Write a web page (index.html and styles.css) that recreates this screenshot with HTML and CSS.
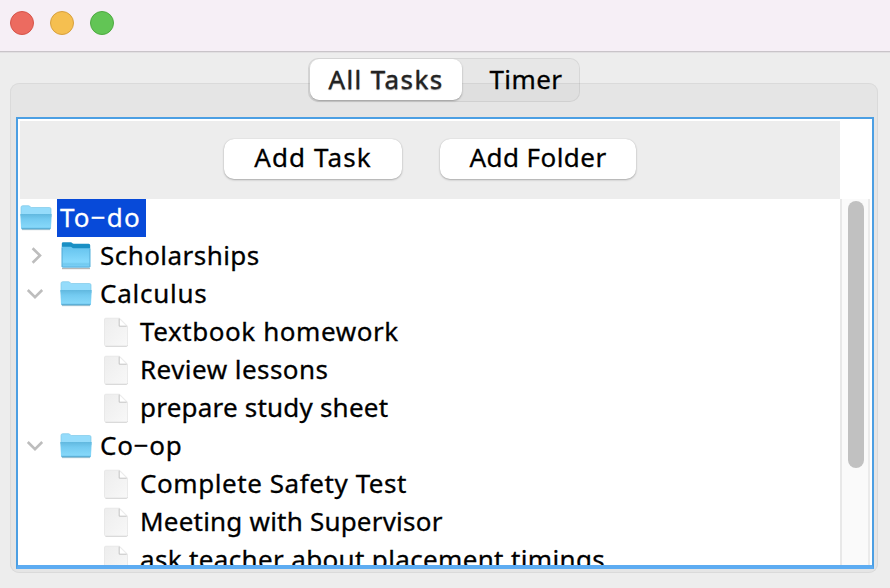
FILE: index.html
```html
<!DOCTYPE html>
<html lang="en">
<head>
<meta charset="utf-8">
<title>Tasks</title>
<link rel="stylesheet" href="styles.css">
</head>
<body>
<svg class="defs" aria-hidden="true">
  <defs>
    <linearGradient id="front" x1="0" y1="0" x2="0" y2="1"><stop offset="0" stop-color="#61b8df"/><stop offset=".35" stop-color="#74cbf1"/><stop offset=".85" stop-color="#85d7f9"/><stop offset="1" stop-color="#62bce8"/></linearGradient>
    <linearGradient id="closed" x1="0" y1="0" x2="0" y2="1"><stop offset="0" stop-color="#65c3ee"/><stop offset=".7" stop-color="#85d9fc"/><stop offset="1" stop-color="#70c8f2"/></linearGradient>
    <linearGradient id="paper" x1="0" y1="0" x2="1" y2="1"><stop offset="0" stop-color="#ededed"/><stop offset="1" stop-color="#f8f8f8"/></linearGradient>
    <symbol id="open-folder" viewBox="0 0 32 38">
      <path d="M2 30h28v1.2H2z" fill="#c6d0d4"/>
      <path d="M1 17V8.4Q1 6.7 2.7 6.7H8.6q1 0 1.5.9t1.5.9H29.5q1.5 0 1.5 1.5v8z" fill="#95dcfb" stroke="#7cc8e8" stroke-width=".7"/>
      <path d="M.3 15h31.4L31 29q-.1 1.2-1.2 1.2H2.2Q1.1 30.2 1 29z" fill="url(#front)"/>
      <path d="M1.8 29.8h28.4" stroke="#529fc4" stroke-width=".8"/>
    </symbol>
    <symbol id="closed-folder" viewBox="0 0 32 38">
      <path d="M2 31.5h28" stroke="#b7b7b7" stroke-width="1.4"/>
      <path d="M1.8 30V6.6Q1.8 5.2 3.3 5.2h7.4q1 0 1.5.8t1.5.8h15q1.5 0 1.5 1.5V30z" fill="#198fc4"/>
      <path d="M1.8 9.8h8.7q1 0 1.5.7t1.5.7h16.7v18.3q0 1-1 1H2.8q-1 0-1-1z" fill="url(#closed)"/>
      <path d="M2.2 11v18.6q0 .5.6.5h26.4q.6 0 .6-.5V12" fill="none" stroke="#51a9d4" stroke-width=".7"/>
      <path d="M3 27h26" stroke="#63b9df" stroke-width=".5"/>
    </symbol>
    <symbol id="file" viewBox="0 0 24 38">
      <path d="M1.5 33.3h21q1 0 1-1" fill="none" stroke="#cecece" stroke-width="1"/>
      <path d="M1.8 5.2h13.7l8 8v18.4q0 1.3-1.3 1.3H1.8q-1.3 0-1.3-1.3V6.5q0-1.3 1.3-1.3z" fill="url(#paper)" stroke="#e2e2e2" stroke-width=".7"/>
      <path d="M15.3 6.2v7h7z" fill="#fff"/>
      <path d="M15.2 5.7v7.5h7.5" fill="none" stroke="#b8b8b8" stroke-width=".8"/>
    </symbol>
    <symbol id="right" viewBox="0 0 18 38"><path d="m6.6 11.2 7.4 7.3-7.4 7.3" fill="none" stroke="#bdbdbd" stroke-width="2.6"/></symbol>
    <symbol id="down" viewBox="0 0 18 38"><path d="m1.8 15 7.2 7.2 7.2-7.2" fill="none" stroke="#bdbdbd" stroke-width="2.6"/></symbol>
  </defs>
</svg>
<header class="titlebar"><i class="light red"></i><i class="light yellow"></i><i class="light green"></i></header>
<main class="window">
  <section class="panel">
    <nav class="tabs"><span class="tab active">All Tasks</span><span class="tab timer">Timer</span></nav>
    <div class="pane">
      <div class="toolbar"><button class="add-task">Add Task</button><button class="add-folder">Add Folder</button></div>
      <div class="scroller">
        <div class="tree">
          <div class="row root"><svg class="folder"><use href="#open-folder"/></svg><span class="label selected">To−do</span></div>
          <div class="row"><svg class="arrow"><use href="#right"/></svg><svg class="folder"><use href="#closed-folder"/></svg><span class="label">Scholarships</span></div>
          <div class="row"><svg class="arrow"><use href="#down"/></svg><svg class="folder"><use href="#open-folder"/></svg><span class="label loose">Calculus</span></div>
          <div class="row leaf"><svg class="file"><use href="#file"/></svg><span class="label roomy">Textbook homework</span></div>
          <div class="row leaf"><svg class="file"><use href="#file"/></svg><span class="label">Review lessons</span></div>
          <div class="row leaf"><svg class="file"><use href="#file"/></svg><span class="label tight">prepare study sheet</span></div>
          <div class="row"><svg class="arrow"><use href="#down"/></svg><svg class="folder"><use href="#open-folder"/></svg><span class="label loose">Co−op</span></div>
          <div class="row leaf"><svg class="file"><use href="#file"/></svg><span class="label roomy">Complete Safety Test</span></div>
          <div class="row leaf"><svg class="file"><use href="#file"/></svg><span class="label tight">Meeting with Supervisor</span></div>
          <div class="row leaf"><svg class="file"><use href="#file"/></svg><span class="label snug">ask teacher about placement timings</span></div>
        </div>
        <div class="track"><div class="thumb"></div></div>
      </div>
    </div>
  </section>
</main>
</body>
</html>
```
FILE: styles.css
```css
* { box-sizing: border-box; }
body { margin: 0; width: 890px; height: 588px; overflow: hidden; background: #ededed; color: #000; font: 26px/36px "Noto Sans", sans-serif; letter-spacing: .45px; -webkit-text-stroke: .3px; }
.defs { position: absolute; width: 0; height: 0; }
.titlebar { height: 52px; padding: 11px 10px; display: flex; gap: 16px; background: #f6eff6; border-bottom: 1px solid #c9c4c9; box-shadow: 0 1px #e2e0e2; }
.light { width: 24px; height: 24px; border-radius: 50%; border: 1px solid; }
.red { background: #ec6b60; border-color: #d65449; }
.yellow { background: #f5bf50; border-color: #d8a03e; }
.green { background: #62c555; border-color: #4eaa41; }
.window { height: 536px; padding: 31px 12px 15px 10px; }
.panel { height: 490px; padding: 0 4px 3px 6px; border-radius: 9px; background: #e5e5e5; box-shadow: inset 0 0 0 1px #dadada; }
.tabs { position: relative; top: -25px; width: 272px; height: 44px; margin: 0 auto -10px 292px; display: flex; background: rgba(0, 0, 0, .025); border: 1px solid rgba(0, 0, 0, .07); border-radius: 10px; }
.tab { height: 41px; line-height: 41px; text-align: center; border-radius: 9px; white-space: nowrap; }
.active { width: 152px; margin-left: 1px; color: #222; background: #fff; box-shadow: 0 1px 2px #999; text-shadow: 0 1px 1px #888; letter-spacing: 1.4px; }
.timer { width: 116px; padding-left: 12px; }
.pane { width: 858px; height: 452px; border: 2px solid #4c9fe3; border-bottom: 4px solid #5dacf2; background: #fff; padding: 2px 2px 0; }
.toolbar { width: 820px; height: 78px; padding: 18px 0 0 204px; display: flex; gap: 38px; background: #ededed; }
button { height: 40px; border: 0; padding: 0 0 4px; border-radius: 10px; background: #fff; color: #000; font: inherit; letter-spacing: inherit; box-shadow: 0 1px 2px #aaa, 0 0 1px #bbb; }
.add-task { width: 178px; letter-spacing: 1.1px; }
.add-folder { width: 196px; }
.scroller { height: 366px; display: flex; overflow: hidden; }
.tree { width: 820px; }
.row { height: 38px; display: flex; padding-left: 8px; }
.root { padding-left: 0; }
.leaf { padding-left: 84px; }
svg { display: block; flex: none; height: 38px; }
.arrow { width: 18px; margin-right: 14px; margin-left: -2px; }
.folder { width: 32px; margin-left: 2px; }
.root .folder { margin-left: 0; }
.file { width: 24px; }
.label { height: 38px; margin-left: 8px; white-space: nowrap; }
.leaf .label { margin-left: 12px; }
.root .label { width: 89px; margin-left: 5px; padding-left: 3px; }
.selected { background: #074ad9; color: #fff; letter-spacing: 1.2px; }
.loose { letter-spacing: .75px; }
.roomy { letter-spacing: .57px; }
.snug { letter-spacing: .35px; }
.tight { letter-spacing: .21px; }
.track { width: 30px; padding: 2px 0 0 6px; background: #fafafa; border-left: 2px solid #e8e8e8; border-right: 2px solid #ebebeb; }
.thumb { width: 16px; height: 267px; border-radius: 8px; background: #c1c1c1; }
```
